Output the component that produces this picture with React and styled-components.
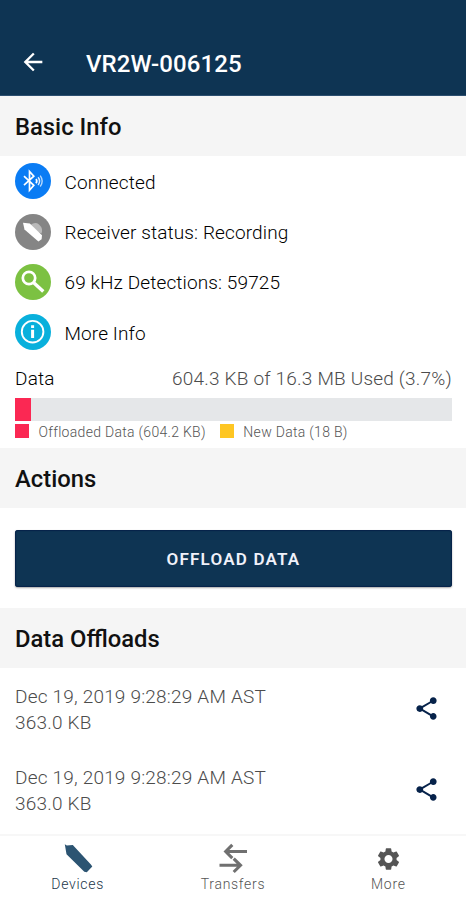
import React from 'react';
import styled, { createGlobalStyle } from 'styled-components';
import { MdArrowBack, MdSettings, MdShare } from 'react-icons/md';

const offloads = [
  { id: 1, date: 'Dec 19, 2019 9:28:29 AM AST', size: '363.0 KB' },
  { id: 2, date: 'Dec 19, 2019 9:28:29 AM AST', size: '363.0 KB' },
];

function BluetoothIcon() {
  return (
    <svg viewBox='0 0 36 36' fill='none' stroke='#fff'>
      <path d='M9 13.2 L18.8 22.3 L14.5 27.2 V8.5 L18.8 13.2 L9 22.2' strokeWidth='1.7' />
      <path d='M21 16 Q22.6 18 21 20.2' strokeWidth='1.7' />
      <path d='M23.1 14.2 Q26.1 18 23.1 22' strokeWidth='1.5' opacity='0.85' />
      <path d='M25.2 12.6 Q29.2 18 25.2 23.5' strokeWidth='1.4' opacity='0.7' />
    </svg>
  );
}

function ReceiverIcon() {
  return (
    <svg viewBox='0 0 36 36'>
      <path d='M15.5 11 Q20 7.5 24 10.5 Q28.5 14.5 26.5 19.5 L23 18Z' fill='#b9b9b9' />
      <path d='M8 8.8 L14.8 9.6 L27 21.3 L26.6 25.2 L23.4 27.6 L9.5 15.6Z' fill='#fff' />
    </svg>
  );
}

function SearchIcon() {
  return (
    <svg viewBox='0 0 36 36' fill='none' stroke='#fff'>
      <circle cx='14' cy='14' r='6.2' strokeWidth='2.7' />
      <path d='M18.5 18.4 L28.3 27.6' strokeWidth='3.4' />
    </svg>
  );
}

function InfoIcon() {
  return (
    <svg viewBox='0 0 36 36' fill='none' stroke='#fff'>
      <circle cx='17.6' cy='17.7' r='10.8' strokeWidth='1.9' />
      <path d='M17.6 11.2 V13.9 M17.6 15.7 V24' strokeWidth='3' />
    </svg>
  );
}

function DeviceIcon() {
  return (
    <svg width='32' height='32' viewBox='0 0 32 32'>
      <path
        d='M2.8 1.2 L4.8 2.6 L10.8 2 L28.9 21.5 L30.3 23.5 L24.8 29.3 L22.3 28.7 L4.5 11.2Z'
        fill='#2c5472'
      />
    </svg>
  );
}

function TransferIcon() {
  return (
    <svg width='32' height='32' viewBox='0 0 32 32' fill='none' stroke='#707070' strokeWidth='3.1'>
      <path d='M30 8.5 H9.5 M15.3 1.8 L8.7 8.5 L15.3 15.2' />
      <path d='M2.5 22.3 H23 M16.7 15.6 L23.5 22.3 L16.7 29' />
    </svg>
  );
}

const infoRows = [
  { text: 'Connected', color: '#0a7cf4', icon: <BluetoothIcon /> },
  { text: 'Receiver status: Recording', color: '#858585', icon: <ReceiverIcon /> },
  { text: '69 kHz Detections: 59725', color: '#7cc142', icon: <SearchIcon /> },
  { text: 'More Info', color: '#09b0dc', icon: <InfoIcon /> },
];

function App() {
  return (
    <Screen>
      <GlobalStyle />
      <Header>
        <MdArrowBack />
        <Title>VR2W-006125</Title>
      </Header>

      <SectionTitle>Basic Info</SectionTitle>
      <InfoList>
        {infoRows.map((row) => (
          <InfoRow key={row.text}>
            <Badge $color={row.color}>{row.icon}</Badge>
            <span>{row.text}</span>
          </InfoRow>
        ))}
      </InfoList>
      <Storage>
        <StorageLabels>
          <span>Data</span>
          <Used>604.3 KB of 16.3 MB Used (3.7%)</Used>
        </StorageLabels>
        <Bar>
          <BarFill />
        </Bar>
        <Legend>
          <LegendItem $color='#fb2853'>
            <span>Offloaded Data (604.2 KB)</span>
          </LegendItem>
          <LegendItem $color='#fec623'>
            <span>New Data (18 B)</span>
          </LegendItem>
        </Legend>
      </Storage>

      <SectionTitle>Actions</SectionTitle>
      <Actions>
        <OffloadButton>OFFLOAD DATA</OffloadButton>
      </Actions>

      <SectionTitle>Data Offloads</SectionTitle>
      <OffloadList>
        {offloads.map((item) => (
          <OffloadRow key={item.id}>
            <OffloadText>
              <span>{item.date}</span>
              <span>{item.size}</span>
            </OffloadText>
            <MdShare />
          </OffloadRow>
        ))}
      </OffloadList>

      <TabBar>
        <Tab $active>
          <DeviceIcon />
          <span>Devices</span>
        </Tab>
        <Tab>
          <TransferIcon />
          <span>Transfers</span>
        </Tab>
        <Tab>
          <GearIcon />
          <span>More</span>
        </Tab>
      </TabBar>
    </Screen>
  );
}

const GlobalStyle = createGlobalStyle`
  * {
    box-sizing: border-box;
  }

  body {
    margin: 0;
    background: #fff;
    font-family: Roboto, 'Liberation Sans', sans-serif;
  }
`

const Screen = styled.div`
  display: flex;
  flex-direction: column;
  height: 900px;
  overflow: hidden;
`

const Header = styled.header`
  display: flex;
  align-items: center;
  height: 96px;
  padding: 32px 19px 0;
  background: #0e3453;
  border-bottom: 1px solid #2c4f70;
  color: #fff;

  svg {
    font-size: 28px;
    margin-top: -4px;
  }
`

const Title = styled.h1`
  margin: 0 0 0 39px;
  font-size: 24px;
  font-weight: 500;
  letter-spacing: 0.1px;
`

const SectionTitle = styled.h2`
  flex: none;
  height: 60px;
  margin: 0;
  padding: 1px 15px 0;
  background: #f5f5f5;
  color: #111;
  font-size: 23.8px;
  font-weight: 500;
  line-height: 60px;
`

const InfoList = styled.div`
  display: flex;
  flex-direction: column;
  flex: none;
`

const InfoRow = styled.div`
  display: flex;
  align-items: center;
  height: 50.4px;
  padding-left: 14.5px;
  gap: 14px;
  color: #000;
  font-size: 19px;
  font-weight: 300;
  letter-spacing: 0.12px;

  span {
    padding-top: 2px;
  }
`

const Badge = styled.div`
  width: 36px;
  height: 36px;
  border-radius: 50%;
  background: ${(props) => props.$color};

  svg {
    display: block;
  }
`

const Storage = styled.div`
  flex: none;
  height: 90.4px;
  padding: 10px 14px 0 15px;
`

const StorageLabels = styled.div`
  display: flex;
  justify-content: space-between;
  height: 30.4px;
  color: #000;
  font-size: 19px;
  font-weight: 300;
  line-height: 22px;
  letter-spacing: 0.2px;
`

const Used = styled.span`
  color: #4c4c4c;
`

const Bar = styled.div`
  height: 23px;
  background: #e5e7e9;
`

const BarFill = styled.div`
  width: 3.7%;
  height: 100%;
  background: #fb2853;
`

const Legend = styled.div`
  display: flex;
  gap: 14px;
  padding-top: 3px;
`

const LegendItem = styled.div`
  display: flex;
  align-items: flex-start;
  gap: 9.5px;
  color: #555;
  font-size: 14px;
  font-weight: 300;
  line-height: 15px;
  letter-spacing: 0.3px;

  &::before {
    content: '';
    width: 14px;
    height: 14px;
    background: ${(props) => props.$color};
  }

  span {
    padding-top: 1px;
  }
`

const Actions = styled.div`
  flex: none;
  height: 100px;
  padding: 22px 14px 0 15px;
`

const OffloadButton = styled.button`
  display: block;
  width: 100%;
  height: 57px;
  padding: 1px 0 0;
  border: 0;
  border-radius: 3px;
  background: #0e3453;
  box-shadow: inset 0 0 1px 1px #06224a, 0 1px 2px rgba(0, 0, 0, 0.35);
  color: #f0f1fa;
  font-family: inherit;
  font-size: 17px;
  font-weight: 600;
  letter-spacing: 1.2px;
`

const OffloadList = styled.div`
  display: flex;
  flex-direction: column;
  height: 166px;
`

const OffloadRow = styled.div`
  display: flex;
  align-items: center;
  justify-content: space-between;
  flex: none;
  height: 81px;
  padding: 2px 26px 0 15px;
  color: #06224a;

  svg {
    font-size: 27px;
    margin-top: -2px;
  }
`

const OffloadText = styled.div`
  display: flex;
  flex-direction: column;
  padding-top: 2px;
  color: #4c4c4c;
  font-size: 19px;
  font-weight: 300;
  line-height: 26px;
  letter-spacing: 0.2px;
`

const TabBar = styled.nav`
  display: flex;
  flex: none;
  height: 66px;
  border-top: 2px solid #f7f7f7;
`

const Tab = styled.div`
  display: flex;
  flex-direction: column;
  align-items: center;
  flex: 1;
  padding-top: 7px;
  color: ${(props) => (props.$active ? '#213548' : '#555')};
  font-size: 14px;
  font-weight: 300;
  line-height: 17px;
  letter-spacing: 0.7px;

  svg {
    height: 32px;
    margin-bottom: 1px;
  }
`

const GearIcon = styled(MdSettings)`
  width: 27px;
  color: #555;
`

export default App;
